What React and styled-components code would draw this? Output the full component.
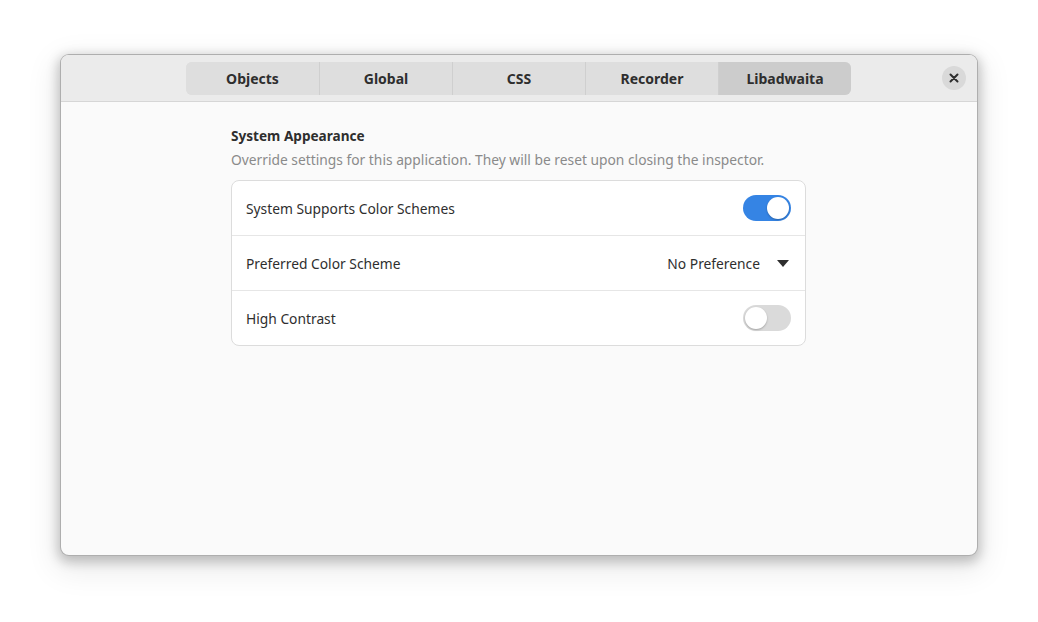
import React from 'react';
import styled, { createGlobalStyle } from 'styled-components';

const GlobalStyle = createGlobalStyle`
  body {
    margin: 0;
    background: #ffffff;
    font-family: "Noto Sans", "Open Sans", sans-serif;
  }
`;

const tabs = ['Objects', 'Global', 'CSS', 'Recorder', 'Libadwaita'];

const rows = [
  { label: 'System Supports Color Schemes', kind: 'switch', on: true },
  { label: 'Preferred Color Scheme', kind: 'dropdown', value: 'No Preference' },
  { label: 'High Contrast', kind: 'switch', on: false },
];

const App = () => (
  <Page>
    <GlobalStyle />
    <Window>
      <HeaderBar>
        <Spacer />
        <TabStrip>
          {tabs.map((t) => (
            <Tab key={t} active={t === 'Libadwaita'}>{t}</Tab>
          ))}
        </TabStrip>
        <HeaderEnd>
          <CloseButton>
            <svg width="10" height="10" viewBox="0 0 10 10">
              <path d="M1.5 1.5 L8.5 8.5 M8.5 1.5 L1.5 8.5" stroke="#2e2e2e" strokeWidth="2" strokeLinecap="round" />
            </svg>
          </CloseButton>
        </HeaderEnd>
      </HeaderBar>
      <Content>
        <Group>
          <GroupTitle>System Appearance</GroupTitle>
          <GroupDescription>
            Override settings for this application. They will be reset upon closing the inspector.
          </GroupDescription>
          <ListBox>
            {rows.map((r) => (
              <Row key={r.label}>
                <RowLabel>{r.label}</RowLabel>
                {r.kind === 'switch' ? (
                  <Switch on={r.on}>
                    <Knob on={r.on} />
                  </Switch>
                ) : (
                  <Dropdown>
                    {r.value}
                    <svg width="12" height="7" viewBox="0 0 12 7">
                      <path d="M0 0 H12 L6 7 Z" fill="#2e2e2e" />
                    </svg>
                  </Dropdown>
                )}
              </Row>
            ))}
          </ListBox>
        </Group>
      </Content>
    </Window>
  </Page>
);

export default App;

const Page = styled.div`
  width: 1038px;
  height: 622px;
  padding: 54px 0 0 60px;
  box-sizing: border-box;
`;

const Window = styled.div`
  width: 918px;
  height: 502px;
  box-sizing: border-box;
  border-radius: 9px;
  overflow: hidden;
  background: #fafafa;
  border: 1px solid rgba(0, 0, 0, 0.3);
  box-shadow: 0 4px 12px 2px rgba(0, 0, 0, 0.22), 0 10px 30px 6px rgba(0, 0, 0, 0.08);
  display: flex;
  flex-direction: column;
`;

const HeaderBar = styled.div`
  height: 47px;
  flex-shrink: 0;
  background: #ebebeb;
  border-bottom: 1px solid #d6d6d6;
  display: flex;
  align-items: center;
  box-sizing: border-box;
`;

const Spacer = styled.div`
  width: 125px;
  flex-shrink: 0;
`;

const TabStrip = styled.div`
  display: flex;
  height: 33px;
  border-radius: 6px;
  overflow: hidden;
  background: #dedede;
`;

const Tab = styled.div`
  width: 133px;
  box-sizing: border-box;
  display: flex;
  align-items: center;
  justify-content: center;
  font-size: 14px;
  font-weight: 700;
  color: #2e2e2e;
  background: ${(p) => (p.active ? '#cccccc' : '#dedede')};
  & + & {
    border-left: 1px solid #cfcfcf;
  }
`;

const HeaderEnd = styled.div`
  flex: 1;
  display: flex;
  justify-content: flex-end;
  padding-right: 11px;
`;

const CloseButton = styled.div`
  width: 24px;
  height: 24px;
  border-radius: 50%;
  background: #d9d9d9;
  display: flex;
  align-items: center;
  justify-content: center;
`;

const Content = styled.div`
  flex: 1;
  display: flex;
  justify-content: center;
  padding-top: 24px;
`;

const Group = styled.div`
  width: 575px;
  margin-left: -1px;
`;

const GroupTitle = styled.div`
  font-size: 13.6px;
  font-weight: 700;
  color: #2e2e2e;
  line-height: 20px;
`;

const GroupDescription = styled.div`
  font-size: 13.8px;
  color: #8a8a8a;
  line-height: 20px;
  margin-top: 4px;
  white-space: nowrap;
`;

const ListBox = styled.div`
  margin-top: 10px;
  background: #ffffff;
  border: 1px solid #dcdcdc;
  border-radius: 8px;
  overflow: hidden;
`;

const Row = styled.div`
  height: 54px;
  display: flex;
  align-items: center;
  justify-content: space-between;
  padding: 0 14px;
  & + & {
    border-top: 1px solid #e6e6e6;
  }
`;

const RowLabel = styled.div`
  font-size: 13.8px;
  color: #2e2e2e;
`;

const Switch = styled.div`
  width: 48px;
  height: 26px;
  border-radius: 13px;
  background: ${(p) => (p.on ? '#3584e4' : '#dadada')};
  position: relative;
`;

const Knob = styled.div`
  position: absolute;
  top: 2px;
  left: ${(p) => (p.on ? '24px' : '2px')};
  width: 22px;
  height: 22px;
  border-radius: 50%;
  background: #ffffff;
  box-shadow: 0 1px 2px rgba(0, 0, 0, 0.25);
`;

const Dropdown = styled.div`
  display: flex;
  align-items: center;
  gap: 17px;
  font-size: 13.8px;
  color: #2e2e2e;
  padding-right: 2px;
`;
